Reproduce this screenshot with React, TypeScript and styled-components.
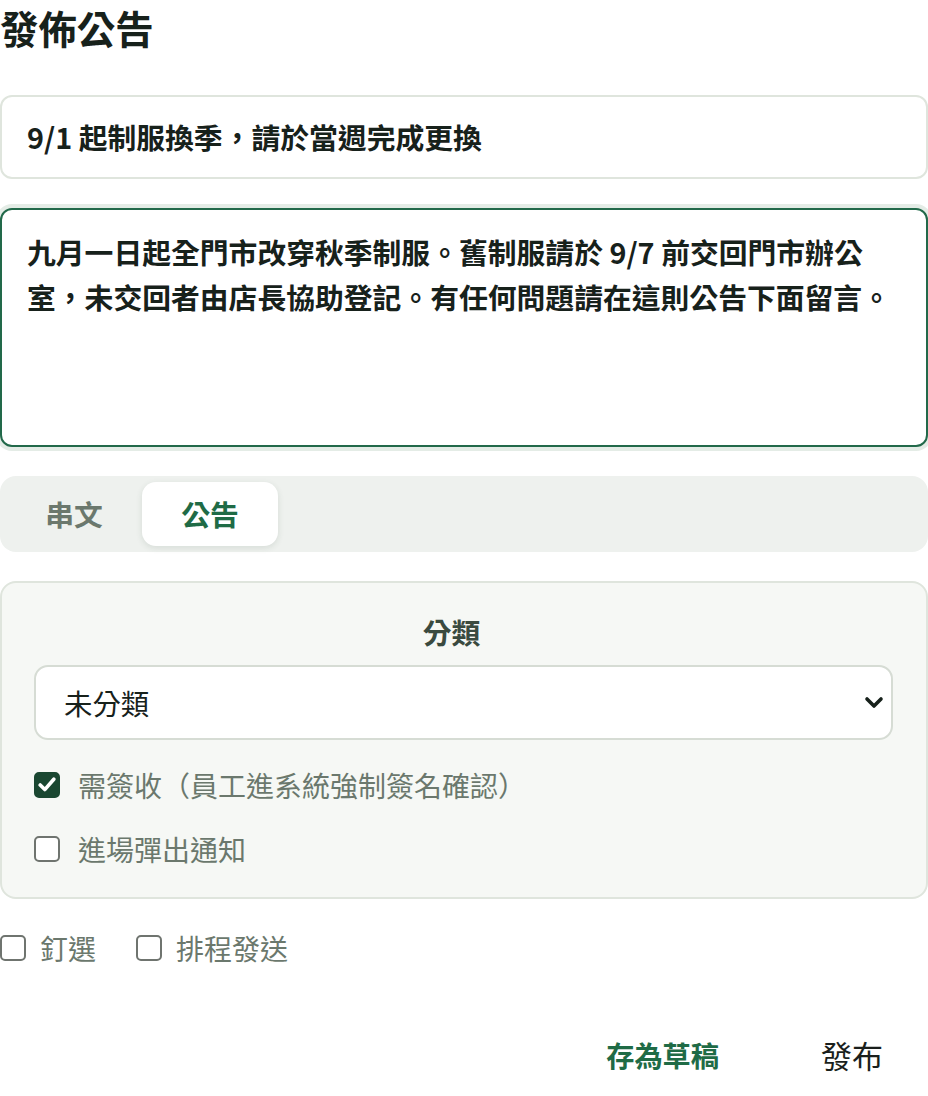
import React from 'react'
import styled, { createGlobalStyle } from 'styled-components'

const GlobalStyle = createGlobalStyle`
	* { box-sizing: border-box; }
	body {
		margin: 0;
		background: #ffffff;
		font-family: "Noto Sans CJK TC", "Noto Sans", sans-serif;
		color: #17211b;
	}
`

const Page = styled.div`
	width: 928px;
	display: flex;
	flex-direction: column;
`

const Title = styled.h1`
	margin: 0 0 39px;
	font-size: 38.4px;
	font-weight: 700;
	line-height: 1.448;
	color: #17211b;
`

const Form = styled.div`
	display: flex;
	flex-direction: column;
	gap: 29px;
`

const TitleInput = styled.input`
	width: 100%;
	margin: 0;
	padding: 19.2px 25px;
	border: 2px solid #dfe5dd;
	border-radius: 12px;
	background: #ffffff;
	font-family: inherit;
	font-size: 28.8px;
	font-weight: 700;
	line-height: 1.448;
	color: #17211b;
	outline: none;
`

const Body = styled.textarea`
	width: 100%;
	height: 239px;
	margin: 0;
	padding: 19px 31px 19px 25px;
	border: 2px solid #22694a;
	border-radius: 12px;
	box-shadow: 0 0 0 4px #e4ece6;
	background: #ffffff;
	font-family: inherit;
	font-size: 28.8px;
	font-weight: 700;
	line-height: 1.58;
	color: #17211b;
	resize: none;
	outline: none;
	overflow: hidden;
`

const Tabs = styled.div`
	display: flex;
	padding: 6px;
	border-radius: 16px;
	background: #eef1ee;
`

const Tab = styled.div<{ $active?: boolean }>`
	width: 136px;
	height: 64px;
	display: flex;
	align-items: center;
	justify-content: center;
	border-radius: 14px;
	font-size: 28.8px;
	font-weight: 700;
	color: ${p => (p.$active ? '#1f6b46' : '#6b786d')};
	background: ${p => (p.$active ? '#ffffff' : 'transparent')};
	box-shadow: ${p => (p.$active ? '0 2px 6px rgba(40, 70, 50, 0.12)' : 'none')};
`

const Card = styled.div`
	display: flex;
	flex-direction: column;
	padding: 28px 33px 27px 32px;
	border: 2px solid #dfe5dd;
	border-radius: 16px;
	background: #f6f8f5;
`

const FieldLabel = styled.div`
	padding-right: 24px;
	text-align: center;
	font-size: 28.8px;
	font-weight: 700;
	line-height: 1.448;
	color: #3a4a3f;
`

const SelectWrap = styled.div`
	position: relative;
	margin: 13px 0 25px;
`

const Select = styled.select`
	width: 100%;
	margin: 0;
	padding: 14.6px 60px 14.6px 28px;
	border: 2px solid #d6dcd4;
	border-radius: 14px;
	background: #ffffff;
	font-family: inherit;
	font-size: 28.4px;
	line-height: 1.448;
	color: #17211b;
	appearance: none;
	outline: none;
`

const Chevron = styled.svg`
	position: absolute;
	right: 9px;
	top: 50%;
	width: 20px;
	height: 14px;
	transform: translateY(-50%);
	pointer-events: none;
`

const Options = styled.div`
	display: flex;
	flex-direction: column;
	gap: 24px;
`

const CheckRow = styled.label<{ $gap: number }>`
	display: inline-flex;
	align-items: center;
	gap: ${p => p.$gap}px;
	font-size: 28px;
	line-height: 1.448;
	color: #6b786d;
`

const Box = styled.span<{ $checked?: boolean }>`
	width: 26px;
	height: 26px;
	flex-shrink: 0;
	display: flex;
	align-items: center;
	justify-content: center;
	border-radius: 5px;
	border: 2px solid ${p => (p.$checked ? '#1a4731' : '#6f746f')};
	background: ${p => (p.$checked ? '#1a4731' : '#ffffff')};
`

const Extras = styled.div`
	display: flex;
	align-items: center;
	gap: 40px;
`

const Actions = styled.div`
	display: flex;
	justify-content: flex-end;
	align-items: center;
	gap: 102px;
	margin-top: 65px;
	padding-right: 45px;
`

const ActionButton = styled.button<{ $primary?: boolean }>`
	margin: 0;
	padding: 0;
	border: none;
	background: none;
	font-family: inherit;
	font-size: ${p => (p.$primary ? '31px' : '28.2px')};
	font-weight: ${p => (p.$primary ? 400 : 700)};
	line-height: 1.448;
	color: ${p => (p.$primary ? '#1a1f1c' : '#1f6b46')};
	cursor: pointer;
`

function Check({ checked, label, gap }: { checked?: boolean, label: string, gap: number }) {
	return (
		<CheckRow $gap={gap}>
			<Box $checked={checked}>
				{checked && (
					<svg width="18" height="15" viewBox="0 0 18 15">
						<path d="M2.2 8 L6.8 12.6 L15.8 2.2" fill="none" stroke="#ffffff" strokeWidth="3.6" strokeLinecap="round" strokeLinejoin="round" />
					</svg>
				)}
			</Box>
			{label}
		</CheckRow>
	)
}

export default function App() {
	return (
		<>
			<GlobalStyle />
			<Page>
				<Title>發佈公告</Title>
				<Form>
					<TitleInput defaultValue="9/1 起制服換季，請於當週完成更換" />
					<Body defaultValue="九月一日起全門市改穿秋季制服。舊制服請於 9/7 前交回門市辦公室，未交回者由店長協助登記。有任何問題請在這則公告下面留言。" />
					<Tabs>
						<Tab>串文</Tab>
						<Tab $active>公告</Tab>
					</Tabs>
					<Card>
						<FieldLabel>分類</FieldLabel>
						<SelectWrap>
							<Select defaultValue="none">
								<option value="none">未分類</option>
								<option value="hr">人事</option>
								<option value="ops">營運</option>
							</Select>
							<Chevron viewBox="0 0 20 14">
								<path d="M3 3 L10 10 L17 3" fill="none" stroke="#17211b" strokeWidth="3.6" strokeLinecap="round" strokeLinejoin="round" />
							</Chevron>
						</SelectWrap>
						<Options>
							<Check checked label="需簽收（員工進系統強制簽名確認）" gap={18} />
							<Check label="進場彈出通知" gap={18} />
						</Options>
					</Card>
					<Extras>
						<Check label="釘選" gap={14} />
						<Check label="排程發送" gap={14} />
					</Extras>
				</Form>
				<Actions>
					<ActionButton>存為草稿</ActionButton>
					<ActionButton $primary>發布</ActionButton>
				</Actions>
			</Page>
		</>
	)
}
